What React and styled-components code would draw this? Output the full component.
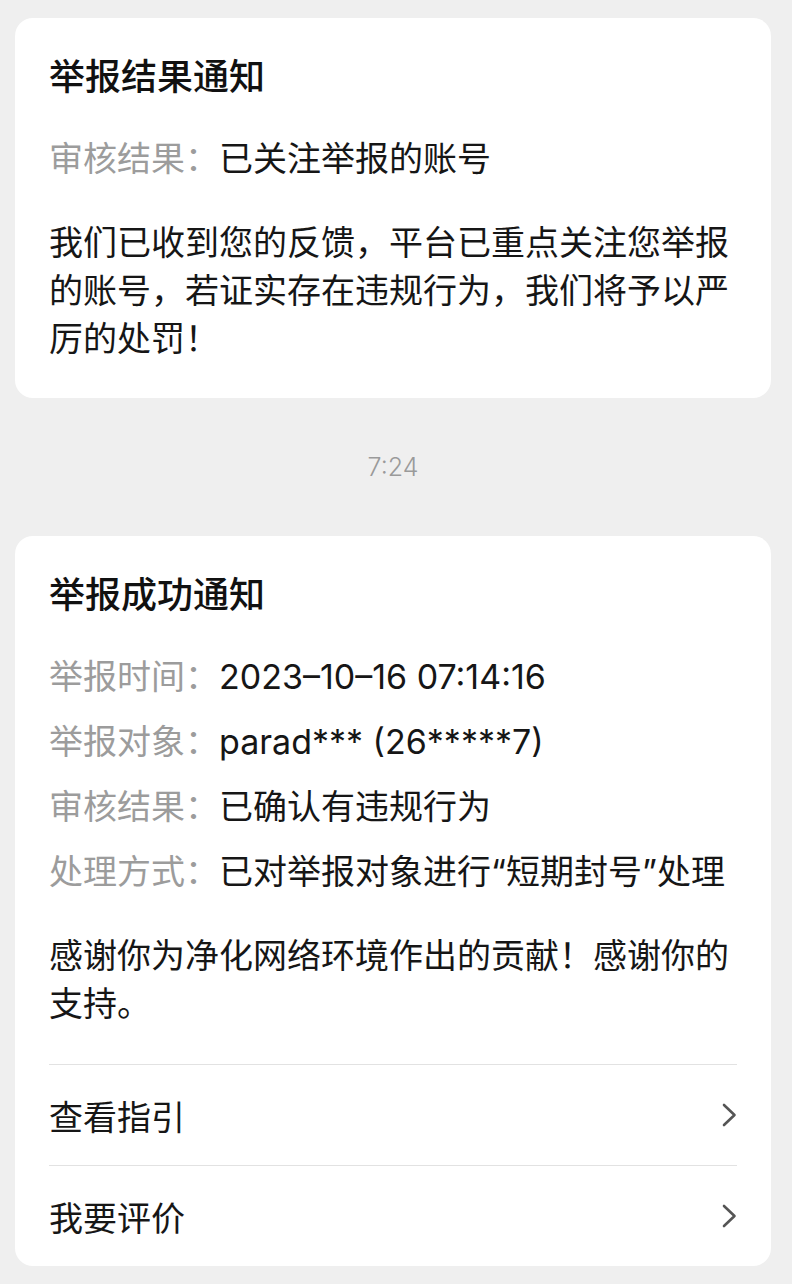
import React from "react";
import styled, { createGlobalStyle } from "styled-components";

const GlobalStyle = createGlobalStyle`
  html, body {
    margin: 0;
    padding: 0;
    background: #efefef;
  }
  body {
    font-family: "Inter", "Noto Sans CJK SC", sans-serif;
    -webkit-font-smoothing: antialiased;
  }
`;

const Page = styled.div`
  display: flex;
  flex-direction: column;
  padding: 18px 21px 18px 15px;
  background: #efefef;
`;

const Card = styled.section`
  background: #ffffff;
  border-radius: 18px;
  padding: 35px 34px ${(p) => (p.$flushBottom ? "0" : "35px")};
  display: flex;
  flex-direction: column;
`;

const Title = styled.h2`
  margin: 0;
  font-size: 36px;
  line-height: 48px;
  font-weight: 500;
  color: #111111;
`;

const Fields = styled.div`
  margin-top: 34px;
  display: flex;
  flex-direction: column;
  gap: 17px;
`;

const Field = styled.div`
  display: flex;
  font-size: 34px;
  line-height: 48px;
  white-space: nowrap;
`;

const Label = styled.span`
  flex: 0 0 170px;
  color: #9c9c9c;
`;

const Value = styled.span`
  color: #161616;
`;

const Body = styled.p`
  margin: 36px 0 0;
  font-size: 34px;
  line-height: 48px;
  color: #161616;
`;

const Time = styled.div`
  margin: 54px 0;
  text-align: center;
  font-size: 25px;
  line-height: 30px;
  color: #9a9a9a;
  font-weight: 300;
`;

const Links = styled.div`
  margin-top: 36px;
  display: flex;
  flex-direction: column;
`;

const LinkRow = styled.div`
  height: 100px;
  border-top: 1.5px solid #e2e2e2;
  display: flex;
  align-items: center;
  justify-content: space-between;
  font-size: 34px;
  color: #161616;
`;

const Chevron = () => (
  <svg width="15" height="24" viewBox="0 0 15 24" fill="none">
    <polyline
      points="2,2 12.5,12 2,22"
      stroke="#555555"
      strokeWidth="2.6"
      strokeLinecap="round"
      strokeLinejoin="round"
    />
  </svg>
);

export default function App() {
  return (
    <>
      <GlobalStyle />
      <Page>
        <Card>
          <Title>举报结果通知</Title>
          <Fields>
            <Field>
              <Label>审核结果：</Label>
              <Value>已关注举报的账号</Value>
            </Field>
          </Fields>
          <Body>
            我们已收到您的反馈，平台已重点关注您举报的账号，若证实存在违规行为，我们将予以严厉的处罚！
          </Body>
        </Card>

        <Time>7:24</Time>

        <Card $flushBottom>
          <Title>举报成功通知</Title>
          <Fields>
            <Field>
              <Label>举报时间：</Label>
              <Value>2023–10–16 07:14:16</Value>
            </Field>
            <Field>
              <Label>举报对象：</Label>
              <Value>parad*** (26*****7)</Value>
            </Field>
            <Field>
              <Label>审核结果：</Label>
              <Value>已确认有违规行为</Value>
            </Field>
            <Field>
              <Label>处理方式：</Label>
              <Value>已对举报对象进行“短期封号”处理</Value>
            </Field>
          </Fields>
          <Body>感谢你为净化网络环境作出的贡献！感谢你的支持。</Body>
          <Links>
            <LinkRow>
              <span>查看指引</span>
              <Chevron />
            </LinkRow>
            <LinkRow>
              <span>我要评价</span>
              <Chevron />
            </LinkRow>
          </Links>
        </Card>
      </Page>
    </>
  );
}
